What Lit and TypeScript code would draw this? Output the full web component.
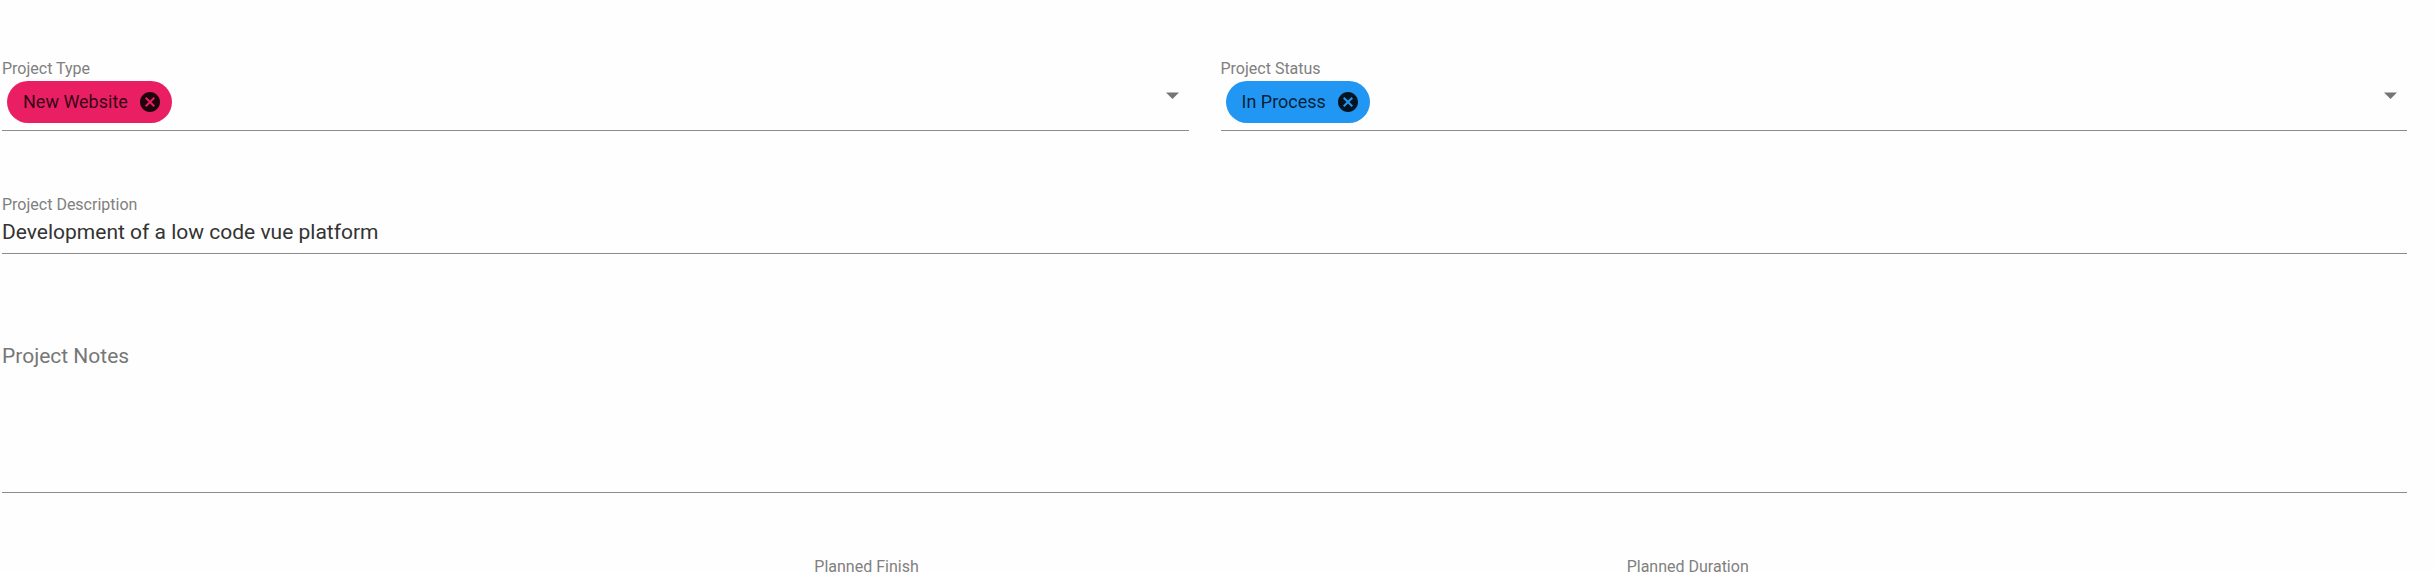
import { LitElement, html, css } from "lit";
import { customElement, property, state } from "lit/decorators.js";

@customElement("chip-select")
class ChipSelect extends LitElement {
  @property() label = "";
  @property() value = "";
  @property() tone = "pink";
  @property({ type: Array }) options: string[] = [];

  static styles = css`
    :host {
      display: block;
    }
    .label {
      display: block;
      height: 20px;
      font-size: 16px;
      line-height: 20px;
      color: #808080;
    }
    .control {
      display: grid;
      grid-template-columns: 1fr auto;
      height: 52px;
      box-sizing: border-box;
      padding-bottom: 2px;
      border-bottom: 1px solid #8c8c8c;
    }
    .select {
      grid-area: 1 / 1 / 2 / 3;
      width: 100%;
      margin: 0;
      border: 0;
      background: none;
      appearance: none;
      color: transparent;
      font: inherit;
      outline: none;
    }
    .select option {
      color: #222;
    }
    .chip {
      grid-area: 1 / 1;
      justify-self: start;
      align-self: start;
      z-index: 1;
      display: flex;
      align-items: center;
      gap: 12px;
      height: 42px;
      margin: 2px 5px;
      padding: 0 12px 0 16px;
      border-radius: 21px;
      box-sizing: border-box;
      font-size: 18px;
      line-height: 20px;
      color: rgba(0, 0, 0, 0.8);
    }
    .pink {
      background: #e91e63;
    }
    .blue {
      background: #2196f3;
    }
    .close {
      display: flex;
      padding: 0;
      border: 0;
      background: none;
      color: rgba(0, 0, 0, 0.87);
      cursor: pointer;
    }
    .arrow {
      grid-area: 1 / 2;
      align-self: start;
      margin: 13px 10px 0 0;
      pointer-events: none;
      z-index: 1;
    }
  `;

  render() {
    return html`
      <label class="label" for="field">${this.label}</label>
      <div class="control">
        <select
          id="field"
          class="select"
          .value=${this.value}
          @change=${(e: Event) => (this.value = (e.target as HTMLSelectElement).value)}
        >
          <option value=""></option>
          ${this.options.map((o) => html`<option value=${o} ?selected=${o === this.value}>${o}</option>`)}
        </select>
        ${this.value
          ? html`<span class="chip ${this.tone}">
              <span>${this.value}</span>
              <button class="close" type="button" aria-label="Remove ${this.value}" @click=${() => (this.value = "")}>
                <svg width="20" height="20" viewBox="2 2 20 20" fill="currentColor" aria-hidden="true">
                  <path
                    d="M12,2C17.53,2 22,6.47 22,12C22,17.53 17.53,22 12,22C6.47,22 2,17.53 2,12C2,6.47 6.47,2 12,2M15.59,7L12,10.59L8.41,7L7,8.41L10.59,12L7,15.59L8.41,17L12,13.41L15.59,17L17,15.59L13.41,12L17,8.41L15.59,7Z"
                  />
                </svg>
              </button>
            </span>`
          : ""}
        <svg class="arrow" width="13" height="7" viewBox="0 0 13 7" fill="#757575" aria-hidden="true">
          <path d="M0 0.4H13L6.5 7Z" />
        </svg>
      </div>
    `;
  }
}

@customElement("app-root")
class AppRoot extends LitElement {
  @state() private description = "Development of a low code vue platform";

  static styles = css`
    :host {
      display: block;
      height: 100vh;
      overflow: hidden;
      background: #fefefe;
      font-family: Roboto, "Liberation Sans", sans-serif;
    }
    .form {
      display: flex;
      flex-direction: column;
      padding: 59px 28px 0 2px;
    }
    .pair,
    .trio {
      display: grid;
      grid-template-columns: repeat(2, 1fr);
      gap: 32px;
    }
    .trio {
      grid-template-columns: repeat(3, 1fr);
      margin-top: 64px;
    }
    .field {
      display: flex;
      flex-direction: column;
    }
    .description {
      margin-top: 64px;
    }
    .label {
      height: 20px;
      font-size: 16px;
      line-height: 20px;
      color: #808080;
    }
    .input {
      width: 100%;
      height: 39px;
      box-sizing: border-box;
      padding: 0 0 4px;
      border: 0;
      border-bottom: 1px solid #8c8c8c;
      border-radius: 0;
      background: none;
      font: inherit;
      font-size: 21px;
      line-height: 32px;
      color: #333;
      outline: none;
    }
    .notes {
      display: block;
      width: 100%;
      height: 153px;
      box-sizing: border-box;
      margin-top: 86px;
      padding: 0;
      border: 0;
      border-bottom: 1px solid #8c8c8c;
      background: none;
      resize: none;
      font: inherit;
      font-size: 21px;
      line-height: 32px;
      color: #333;
      outline: none;
    }
    .notes::placeholder {
      color: #777;
      opacity: 1;
    }
  `;

  render() {
    return html`
      <form class="form" @submit=${(e: Event) => e.preventDefault()}>
        <div class="pair">
          <chip-select label="Project Type" value="New Website" tone="pink" .options=${["New Website"]}></chip-select>
          <chip-select label="Project Status" value="In Process" tone="blue" .options=${["In Process"]}></chip-select>
        </div>
        <div class="field description">
          <label class="label" for="description">Project Description</label>
          <input
            id="description"
            class="input"
            .value=${this.description}
            @input=${(e: Event) => (this.description = (e.target as HTMLInputElement).value)}
          />
        </div>
        <textarea class="notes" aria-label="Project Notes" placeholder="Project Notes"></textarea>
        <div class="trio">
          <div></div>
          <div class="field">
            <label class="label" for="finish">Planned Finish</label>
            <input id="finish" class="input" />
          </div>
          <div class="field">
            <label class="label" for="duration">Planned Duration</label>
            <input id="duration" class="input" />
          </div>
        </div>
      </form>
    `;
  }
}
